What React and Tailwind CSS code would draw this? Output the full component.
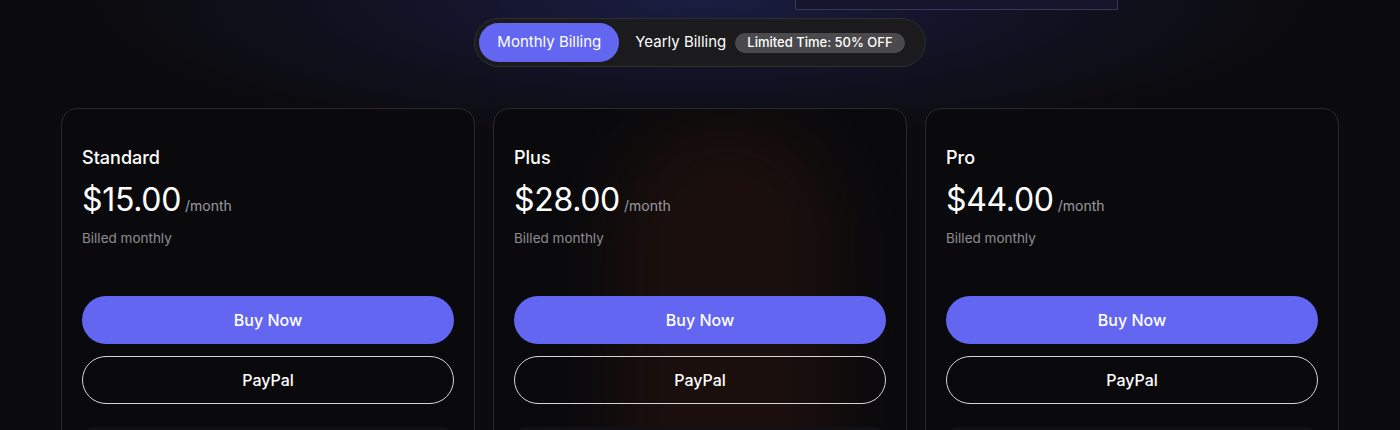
import React from 'react';

const plans = [
  { name: 'Standard', price: '$15.00' },
  { name: 'Plus', price: '$28.00', glow: true },
  { name: 'Pro', price: '$44.00' },
];

const PlanCard = ({ plan }) => (
  <div className="relative overflow-hidden rounded-2xl border border-[#2a2a2e] bg-[#0a0a0c] px-5 pt-[35px]">
    {plan.glow && (
      <div className="pointer-events-none absolute left-[120px] top-[10px] h-[640px] w-[225px] rounded-full bg-[#24120d]/60 blur-[30px]" />
    )}
    <div className="relative">
      <h3 className="text-lg leading-7 font-medium text-white">{plan.name}</h3>
      <div className="mt-2 flex items-baseline gap-1">
        <span className="text-[32px] leading-10 font-normal tracking-[-0.01em] text-white">{plan.price}</span>
        <span className="text-sm text-[#9a9aa0]">/month</span>
      </div>
      <p className="mt-2 text-[13.5px] leading-5 text-[#8e8e94]">Billed monthly</p>

      <button className="mt-12 flex h-12 w-full items-center justify-center rounded-full bg-[#6366f1] text-base font-medium text-white">
        Buy Now
      </button>
      <button className="mt-3 flex h-12 w-full items-center justify-center rounded-full border border-[#d4d4d8] text-base font-medium text-white">
        PayPal
      </button>

      {/* feature list (cut off) */}
      <div className="mx-[3px] mt-[23px] h-10 rounded-lg bg-[#111115]" />
    </div>
  </div>
);

export default function App() {
  return (
    <div
      className="h-[430px] w-full overflow-hidden bg-[#0b0b0d] bg-[radial-gradient(ellipse_620px_150px_at_50%_0%,rgba(30,32,76,0.85),rgba(22,23,50,0.55)_55%,transparent_100%)]"
      style={{ fontFamily: 'Inter, "Noto Sans", sans-serif' }}
    >
      {/* bottom edge of preview frame above */}
      <div className="flex h-[10px]">
        <div className="ml-[795px] h-[10px] w-[323px] border-x border-b border-[#34365a] bg-[#15162c]" />
      </div>

      <div className="mt-2 flex justify-center">
        <div className="flex items-center rounded-full border border-[#2e2e32] bg-[#1b1b1d] py-1 pl-1 pr-[20px]">
          <button className="h-[39px] rounded-full bg-[#6366f1] px-[18px] text-[15px] text-white">
            Monthly Billing
          </button>
          <span className="ml-4 text-[15px] text-white">Yearly Billing</span>
          <span className="ml-[9px] flex h-5 items-center rounded-full bg-[#4a4a4c] px-3 text-[13px] font-medium text-white">
            Limited Time: 50% OFF
          </span>
        </div>
      </div>

      <div className="mx-[61px] mt-[41px] grid grid-cols-3 gap-[18px]">
        {plans.map((plan) => (
          <PlanCard key={plan.name} plan={plan} />
        ))}
      </div>
    </div>
  );
}
